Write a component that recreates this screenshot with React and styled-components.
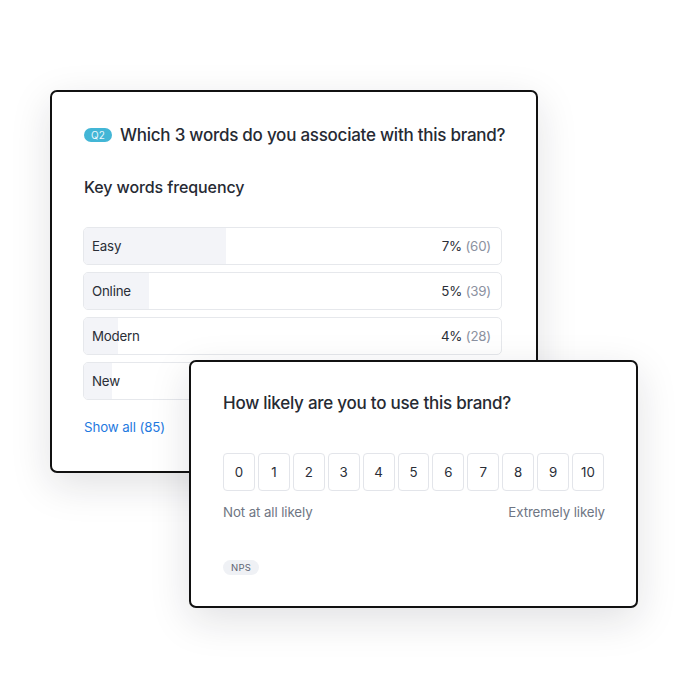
import React from "react";
import styled, { createGlobalStyle } from "styled-components";

const Global = createGlobalStyle`
  html, body { margin: 0; padding: 0; background: #ffffff; }
  body { font-family: Inter, "Noto Sans", "Liberation Sans", sans-serif; color: #23272f; }
  * { box-sizing: border-box; }
`;

const Stage = styled.div`
  position: relative;
  width: 687px;
  height: 700px;
  padding: 90px 0 0 50px;
`;

const Card = styled.div`
  background: #fff;
  border: 2px solid #111;
  border-radius: 7px;
  box-shadow: 0 12px 40px rgba(20, 24, 40, 0.13);
  display: flex;
  flex-direction: column;
`;

const WordsCard = styled(Card)`
  width: 488px;
  height: 383px;
  padding: 31px 34px 0 32px;
`;

const NpsCard = styled(Card)`
  position: absolute;
  left: 189px;
  top: 360px;
  width: 449px;
  height: 248px;
  padding: 29px 32px 0 32px;
`;

const Header = styled.div`
  display: flex;
  align-items: center;
  gap: 8px;
  height: 24px;
  white-space: nowrap;
`;

const QBadge = styled.span`
  display: inline-flex;
  align-items: center;
  justify-content: center;
  background: #43b6d6;
  color: #eaf8fc;
  font-size: 10px;
  height: 14px;
  width: 28px;
  border-radius: 7px;
  letter-spacing: 0.2px;
  flex: none;
`;

const Title = styled.div`
  font-size: 17px;
  font-weight: 500;
  line-height: 24px;
  color: #262a33;
  letter-spacing: -0.25px;
  white-space: nowrap;
`;

const Subtitle = styled.div`
  margin-top: 29px;
  font-size: 16px;
  font-weight: 500;
  line-height: 22px;
  color: #262a33;
  letter-spacing: -0.1px;
`;

const Rows = styled.div`
  margin-top: 29px;
  margin-left: -1px;
  display: flex;
  flex-direction: column;
  gap: 7px;
`;

const Row = styled.div`
  position: relative;
  height: 38px;
  border: 1px solid #e6e8ec;
  border-radius: 5px;
  overflow: hidden;
  display: flex;
  align-items: center;
  justify-content: space-between;
  padding: 0 10px 0 8px;
  font-size: 13.3px;
  color: #2a2e37;
`;

const Fill = styled.div`
  position: absolute;
  left: 0;
  top: 0;
  bottom: 0;
  background: #f3f4f8;
`;

const RowText = styled.span`
  position: relative;
  letter-spacing: -0.2px;
`;

const Count = styled.span`
  color: #8b91a0;
`;

const ShowAll = styled.a`
  margin-top: 17px;
  font-size: 13.3px;
  line-height: 20px;
  color: #1f7ae0;
  text-decoration: none;
  align-self: flex-start;
  letter-spacing: -0.1px;
`;

const Scale = styled.div`
  margin-top: 38px;
  display: flex;
  gap: 3px;
`;

const ScaleBox = styled.div`
  width: 32px;
  height: 38px;
  border: 1px solid #e3e5ea;
  border-radius: 4px;
  display: flex;
  align-items: center;
  justify-content: center;
  font-size: 13.3px;
  color: #2a2e37;
`;

const Labels = styled.div`
  margin-top: 11px;
  width: 382px;
  display: flex;
  justify-content: space-between;
  font-size: 13.3px;
  line-height: 20px;
  color: #6f7683;
  letter-spacing: -0.1px;
`;

const Tag = styled.span`
  margin-top: 38px;
  align-self: flex-start;
  background: #eff1f5;
  color: #5d6472;
  font-size: 9.5px;
  height: 15px;
  padding: 0 8px;
  border-radius: 8px;
  display: inline-flex;
  align-items: center;
  letter-spacing: 0.3px;
`;

const words = [
  { label: "Easy", pct: "7%", n: 60, w: 34 },
  { label: "Online", pct: "5%", n: 39, w: 15.5 },
  { label: "Modern", pct: "4%", n: 28, w: 8.2 },
  { label: "New", pct: "3%", n: 21, w: 6.7 },
];

export default function App() {
  return (
    <>
      <Global />
      <Stage>
        <WordsCard>
          <Header>
            <QBadge>Q2</QBadge>
            <Title>Which 3 words do you associate with this brand?</Title>
          </Header>
          <Subtitle>Key words frequency</Subtitle>
          <Rows>
            {words.map((w) => (
              <Row key={w.label}>
                <Fill style={{ width: `${w.w}%` }} />
                <RowText>{w.label}</RowText>
                <RowText>
                  {w.pct} <Count>({w.n})</Count>
                </RowText>
              </Row>
            ))}
          </Rows>
          <ShowAll href="#">Show all (85)</ShowAll>
        </WordsCard>
        <NpsCard>
          <Title>How likely are you to use this brand?</Title>
          <Scale>
            {Array.from({ length: 11 }, (_, i) => (
              <ScaleBox key={i}>{i}</ScaleBox>
            ))}
          </Scale>
          <Labels>
            <span>Not at all likely</span>
            <span>Extremely likely</span>
          </Labels>
          <Tag>NPS</Tag>
        </NpsCard>
      </Stage>
    </>
  );
}
